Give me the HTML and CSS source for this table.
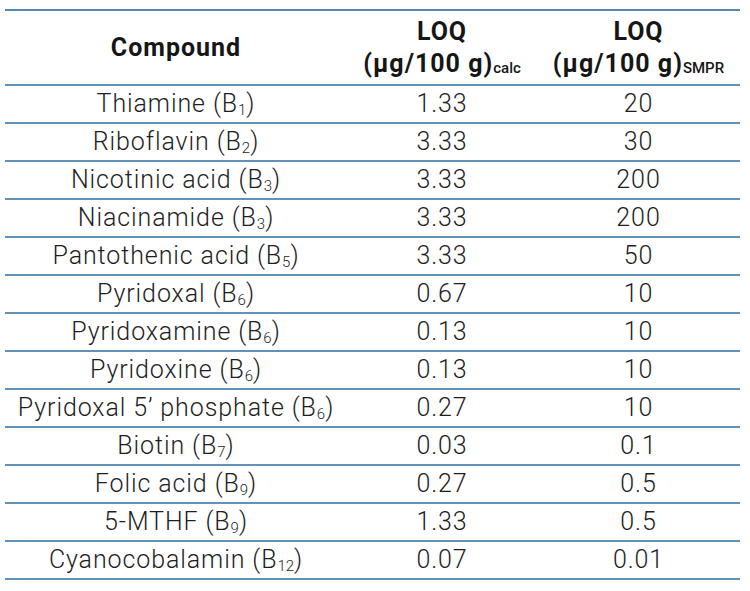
FILE: index.html
```html
<!DOCTYPE html>
<html lang="en">
<head>
<meta charset="utf-8">
<title>LOQ table</title>
<link rel="stylesheet" href="styles.css">
</head>
<body>
<table class="loq">
  <colgroup>
    <col class="c1"><col class="c2"><col class="c3">
  </colgroup>
  <thead>
    <tr>
      <th>Compound</th>
      <th>LOQ<br>(µg/100 g)<sub class="hs">calc</sub></th>
      <th>LOQ<br>(µg/100 g)<sub class="hs">SMPR</sub></th>
    </tr>
  </thead>
  <tbody>
    <tr><td>Thiamine (B<sub>1</sub>)</td><td>1.33</td><td>20</td></tr>
    <tr><td>Riboflavin (B<sub>2</sub>)</td><td>3.33</td><td>30</td></tr>
    <tr><td>Nicotinic acid (B<sub>3</sub>)</td><td>3.33</td><td>200</td></tr>
    <tr><td>Niacinamide (B<sub>3</sub>)</td><td>3.33</td><td>200</td></tr>
    <tr><td>Pantothenic acid (B<sub>5</sub>)</td><td>3.33</td><td>50</td></tr>
    <tr><td>Pyridoxal (B<sub>6</sub>)</td><td>0.67</td><td>10</td></tr>
    <tr><td>Pyridoxamine (B<sub>6</sub>)</td><td>0.13</td><td>10</td></tr>
    <tr><td>Pyridoxine (B<sub>6</sub>)</td><td>0.13</td><td>10</td></tr>
    <tr><td>Pyridoxal 5’ phosphate (B<sub>6</sub>)</td><td>0.27</td><td>10</td></tr>
    <tr><td>Biotin (B<sub>7</sub>)</td><td>0.03</td><td>0.1</td></tr>
    <tr><td>Folic acid (B<sub>9</sub>)</td><td>0.27</td><td>0.5</td></tr>
    <tr><td>5-MTHF (B<sub>9</sub>)</td><td>1.33</td><td>0.5</td></tr>
    <tr><td>Cyanocobalamin (B<sub>12</sub>)</td><td>0.07</td><td>0.01</td></tr>
  </tbody>
</table>
</body>
</html>
```
FILE: styles.css
```css
html, body {
  margin: 0;
  padding: 0;
  background: #ffffff;
}
body {
  padding: 9px 0 0 5px;
  font-family: Roboto, "Liberation Sans", sans-serif;
  color: #1c1c1c;
}
.loq {
  border-collapse: collapse;
  width: 735px;
  table-layout: fixed;
  border-top: 2px solid #4f88b0;
}
.c1 { width: 342px; }
.c2 { width: 190px; }
.c3 { width: 203px; }
.loq th,
.loq td {
  padding: 0;
  text-align: center;
  border-bottom: 2px solid #5f93b8;
}
.loq th {
  height: 73px;
  font-weight: 700;
  font-size: 25px;
  line-height: 32px;
  letter-spacing: 1px;
  color: #161616;
}
.loq td {
  height: 36px;
  font-weight: 300;
  font-size: 25px;
  line-height: 36px;
  letter-spacing: 0.9px;
  color: #1e1e1e;
}
.loq sub {
  font-size: 15px;
  line-height: 0;
  letter-spacing: 0;
  vertical-align: -3px;
}
.loq sub.hs {
  font-size: 15px;
  font-weight: 500;
  vertical-align: -1px;
}
```
